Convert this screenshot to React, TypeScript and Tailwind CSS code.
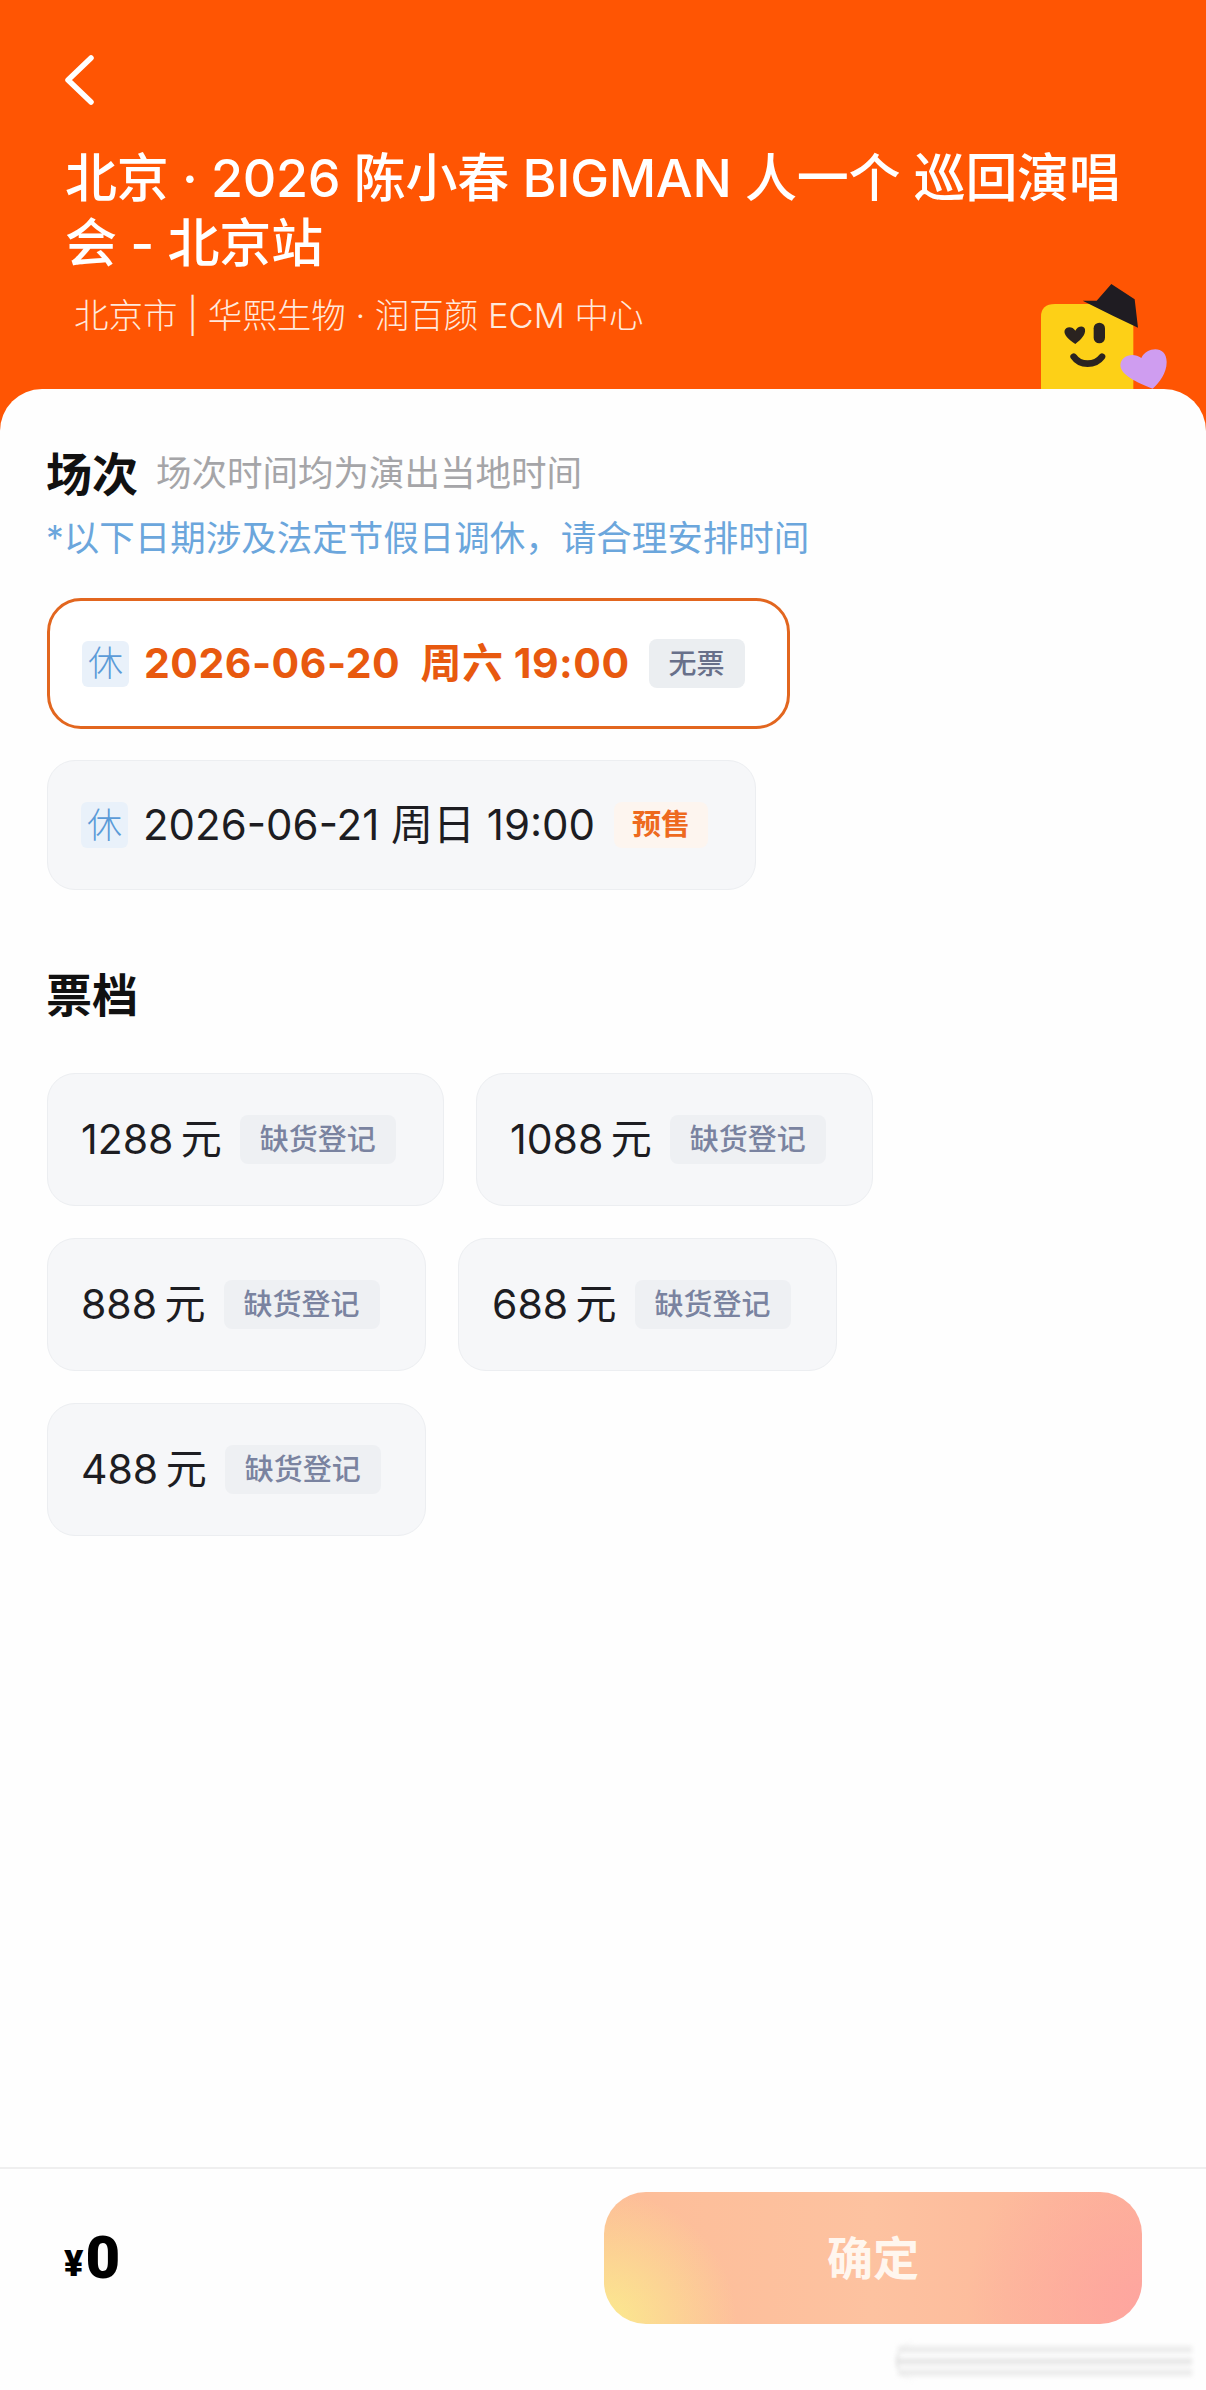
import React from "react";

const FONT = "font-['Inter','Noto_Sans_CJK_SC',sans-serif]";

const Mascot = () => (
  <svg viewBox="0 0 618 450" className="absolute left-[1000px] top-[260px] w-[206px] h-[150px]">
    <path d="M123 400V170Q123 132 165 132H360Q400 132 400 170V400Z" fill="#fdd017" />
    <path d="M248 122L290 122L334 72L404 118L414 203L340 168Z" fill="#1f1c22" />
    <path d="M226 252C205 238 190 224 194 211C199 198 218 199 226 212C232 198 252 194 255 208C258 224 242 240 226 252Z" fill="#2a2320" />
    <rect x="281" y="188" width="34" height="62" rx="17" fill="#2a2320" />
    <path d="M221 290C240 318 285 318 306 290" fill="none" stroke="#2a2320" strokeWidth="20" strokeLinecap="round" />
    <path d="M458 386C410 368 362 345 361 316C362 286 400 276 424 294C440 260 500 254 500 306C500 340 478 368 458 386Z" fill="#cf9df0" />
  </svg>
);

const Tag = ({ label, className }: { label: string; className: string }) => (
  <span className={`inline-flex items-center justify-center rounded-lg ${className}`}>{label}</span>
);

const XiuBadge = () => (
  <span className="flex h-[46px] w-[47px] shrink-0 items-center justify-center rounded-md bg-[#e9f1fa] text-[35px] font-light text-[#5b9bd8]">
    休
  </span>
);

const PriceCard = ({ price, width }: { price: string; width: string }) => (
  <div className={`flex h-[133px] items-center gap-[18px] rounded-[28px] border border-[#eceef1] bg-[#f6f7f9] pl-[33px] ${width}`}>
    <span className="text-[41px] leading-none text-[#1d1d22]">{price}</span>
    <Tag
      label="缺货登记"
      className="h-[49px] w-[156px] bg-[#eef0f3] text-[29px] font-medium text-[#7a83a0]"
    />
  </div>
);

export default function App() {
  return (
    <div className={`relative flex h-[2390px] w-[1206px] flex-col overflow-hidden bg-[#ff5503] ${FONT}`}>
      <Mascot />

      {/* header */}
      <header className="relative h-[389px] shrink-0 pl-[65px] pt-[55px] text-white">
        <svg viewBox="0 0 30 50" className="-ml-[1px] h-[50px] w-[30px]" fill="none" stroke="#fff" strokeWidth="5.5" strokeLinecap="round" strokeLinejoin="round">
          <path d="M27 3L4 25L27 47" />
        </svg>
        <h1 className="mt-[41px] w-[1090px] text-[52px] font-medium leading-[65px] tracking-[-0.3px]">
          北京 · 2026 陈小春 BIGMAN 人一个 巡回演唱会 - 北京站
        </h1>
        <p className="ml-[9px] mt-[18px] text-[34.5px] font-light leading-[44px] text-[#ffe9dc]">
          北京市 | 华熙生物 · 润百颜 ECM 中心
        </p>
      </header>

      {/* panel */}
      <main className="relative flex flex-1 flex-col rounded-t-[42px] bg-[#fefefe]">
        <div className="flex-1 pl-[47px] pt-[56px]">
          <div className="-ml-[1px] flex h-[58px] items-center gap-[18px]">
            <h2 className="text-[46px] font-semibold leading-none text-[#111]">场次</h2>
            <span className="text-[35.5px] leading-none text-[#a5a5a8]">场次时间均为演出当地时间</span>
          </div>
          <p className="-ml-[1px] mt-[13px] text-[35.5px] leading-[46px] text-[#6ba6dc]">
            *以下日期涉及法定节假日调休，请合理安排时间
          </p>

          <div className="mt-[36px] flex h-[131px] w-[743px] items-center rounded-[34px] border-[3px] border-[#e2661f] bg-white pl-[32px]">
            <XiuBadge />
            <span className="ml-[15px] text-[41px] font-bold leading-none tracking-[0.5px] text-[#e8590f]">
              2026-06-20&nbsp; 周六 19:00
            </span>
            <Tag label="无票" className="ml-[19px] h-[49px] w-[96px] bg-[#ebeef1] text-[28px] font-medium text-[#68708a]" />
          </div>

          <div className="mt-[31px] flex h-[130px] w-[709px] items-center rounded-[28px] border border-[#eceef1] bg-[#f6f7f9] pl-[33px]">
            <XiuBadge />
            <span className="ml-[15px] text-[42px] leading-none text-[#1d1d22]">2026-06-21 周日 19:00</span>
            <Tag label="预售" className="ml-[19px] h-[46px] w-[94px] bg-[#fdf5ef] text-[29px] font-semibold text-[#ee6a1f]" />
          </div>

          <h2 className="-ml-[1px] mt-[76px] text-[46px] font-semibold leading-[58px] text-[#111]">票档</h2>

          <div className="mt-[49px] flex flex-col gap-[32px]">
            <div className="flex gap-[32px]">
              <PriceCard price="1288&#8201;元" width="w-[397px]" />
              <PriceCard price="1088&#8201;元" width="w-[397px]" />
            </div>
            <div className="flex gap-[32px]">
              <PriceCard price="888&#8201;元" width="w-[379px]" />
              <PriceCard price="688&#8201;元" width="w-[379px]" />
            </div>
            <PriceCard price="488&#8201;元" width="w-[379px]" />
          </div>
        </div>

        {/* bottom bar */}
        <footer className="flex h-[223px] shrink-0 justify-between border-t-2 border-[#efefef] pl-[64px] pr-[64px] pt-[23px]">
          <div className="flex h-[132px] items-center font-['Roboto','Noto_Sans_CJK_SC',sans-serif] font-black text-black">
            <span className="mt-[12px] text-[36px] leading-none">¥</span>
            <span className="ml-[2px] text-[60px] leading-none">0</span>
          </div>
          <button className="flex h-[132px] w-[538px] items-center justify-center rounded-[42px] bg-[radial-gradient(circle_at_0%_100%,#fbeb8e_0%,rgba(251,235,142,0)_24%),radial-gradient(circle_at_100%_85%,#fea59f_0%,rgba(254,165,159,0)_32%),linear-gradient(90deg,#fdbd98,#fdc2a0_50%,#fdb498)] text-[46px] font-semibold text-[#fff6ee]">
            确定
          </button>
        </footer>

        {/* blurred watermark */}
        <div className="absolute bottom-[10px] right-[14px] flex h-[38px] w-[296px] flex-col justify-between rounded-l-full border-l-2 border-[#dcdcdc] py-[4px] blur-[2px]">
          <div className="h-[7px] bg-[#ececec]" />
          <div className="h-[7px] bg-[#e8e8e8]" />
          <div className="h-[7px] bg-[#ececec]" />
        </div>
      </main>
    </div>
  );
}
